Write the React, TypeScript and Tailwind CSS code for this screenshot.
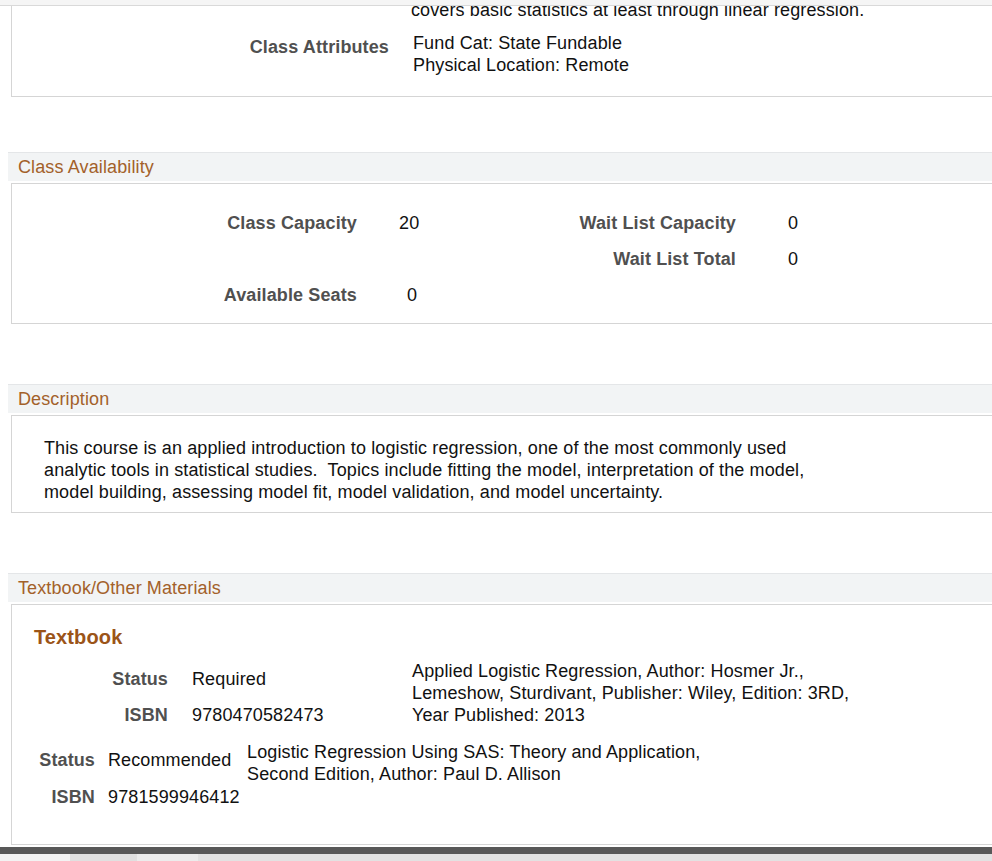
import React from "react";

const font = { fontFamily: '"Liberation Sans", Arial, sans-serif' };

function SectionHeader({ title }: { title: string }) {
  return (
    <div className="ml-[8px] h-[29px] border-t border-[#e4e6e8] bg-[#f2f4f5] pl-[10px] flex items-center text-[18px] leading-[22px] text-[#a3612a]">
      {title}
    </div>
  );
}

function Box({ children, className = "" }: { children: React.ReactNode; className?: string }) {
  return (
    <div className={"ml-[11px] w-[1000px] border border-[#d5d5d5] bg-white " + className}>
      {children}
    </div>
  );
}

export default function App() {
  return (
    <div
      className="w-[992px] h-[861px] overflow-hidden bg-white text-[18px] leading-[22px] tracking-[0.12px] text-[#111]"
      style={font}
    >
      {/* top fixed header strip */}
      <div className="h-[6px] bg-[#f5f5f5] border-b border-[#d9d9d9]" />

      {/* Box 1 (scrolled, top clipped) */}
      <div className="ml-[11px] w-[1000px] h-[91px] border-l border-b border-[#d5d5d5] overflow-hidden">
        <div className="-mt-[7px] pl-[399px]">
          covers basic statistics at least through linear regression.
        </div>
        <div className="mt-[11px] flex">
          <div className="w-[377px] pt-[4px] text-right font-bold text-[#505050]">Class Attributes</div>
          <div className="ml-[24px]">
            <div>Fund Cat: State Fundable</div>
            <div>Physical Location: Remote</div>
          </div>
        </div>
      </div>

      {/* Class Availability */}
      <div className="mt-[55px]">
        <SectionHeader title="Class Availability" />
        <Box className="mt-[2px] h-[141px] pt-[21px]">
          <div className="grid grid-cols-[345px_100px_279px_100px] auto-rows-[36px] items-center">
            <div className="text-right font-bold text-[#505050]">Class Capacity</div>
            <div className="pl-[42px]">20</div>
            <div className="text-right font-bold text-[#505050]">Wait List Capacity</div>
            <div className="pl-[52px]">0</div>

            <div />
            <div />
            <div className="text-right font-bold text-[#505050]">Wait List Total</div>
            <div className="pl-[52px]">0</div>

            <div className="text-right font-bold text-[#505050]">Available Seats</div>
            <div className="pl-[50px]">0</div>
            <div />
            <div />
          </div>
        </Box>
      </div>

      {/* Description */}
      <div className="mt-[60px]">
        <SectionHeader title="Description" />
        <Box className="mt-[2px] h-[98px] pt-[21px] pl-[32px]">
          <div>This course is an applied introduction to logistic regression, one of the most commonly used</div>
          <div>analytic tools in statistical studies.&nbsp; Topics include fitting the model, interpretation of the model,</div>
          <div>model building, assessing model fit, model validation, and model uncertainty.</div>
        </Box>
      </div>

      {/* Textbook/Other Materials */}
      <div className="mt-[60px]">
        <SectionHeader title="Textbook/Other Materials" />
        <Box className="mt-[2px] h-[241px] pt-[21px]">
          <div className="pl-[22px] text-[20px] leading-[23px] font-bold text-[#9b5418]">Textbook</div>

          {/* Book 1 */}
          <div className="mt-[12px] flex">
            <div className="flex">
              <div className="w-[156px] text-right font-bold text-[#505050]">
                <div className="h-[36px] flex items-center justify-end">Status</div>
                <div className="h-[36px] flex items-center justify-end">ISBN</div>
              </div>
              <div className="ml-[24px] w-[220px]">
                <div className="h-[36px] flex items-center">Required</div>
                <div className="h-[36px] flex items-center">9780470582473</div>
              </div>
            </div>
            <div className="-mt-[1px]">
              <div>Applied Logistic Regression, Author: Hosmer Jr.,</div>
              <div>Lemeshow, Sturdivant, Publisher: Wiley, Edition: 3RD,</div>
              <div>Year Published: 2013</div>
            </div>
          </div>

          {/* Book 2 */}
          <div className="mt-[9px] flex">
            <div className="flex">
              <div className="w-[83px] text-right font-bold text-[#505050]">
                <div className="h-[36px] flex items-center justify-end">Status</div>
                <div className="h-[37px] flex items-center justify-end">ISBN</div>
              </div>
              <div className="ml-[13px] w-[130px]">
                <div className="h-[36px] flex items-center">Recommended</div>
                <div className="h-[37px] flex items-center">9781599946412</div>
              </div>
            </div>
            <div className="ml-[9px] -mt-[1px]">
              <div>Logistic Regression Using SAS: Theory and Application,</div>
              <div>Second Edition, Author: Paul D. Allison</div>
            </div>
          </div>
        </Box>
      </div>

      {/* bottom bars */}
      <div className="mt-[2px] h-[7px] bg-[#585858]" />
      <div className="h-[8px] flex">
        <div className="w-[70px] bg-[#f3f3f3]" />
        <div className="w-[67px] bg-[#e0e0e0]" />
        <div className="w-[61px] bg-[#ececec]" />
        <div className="flex-1 bg-[#e2e2e2]" />
      </div>
    </div>
  );
}
